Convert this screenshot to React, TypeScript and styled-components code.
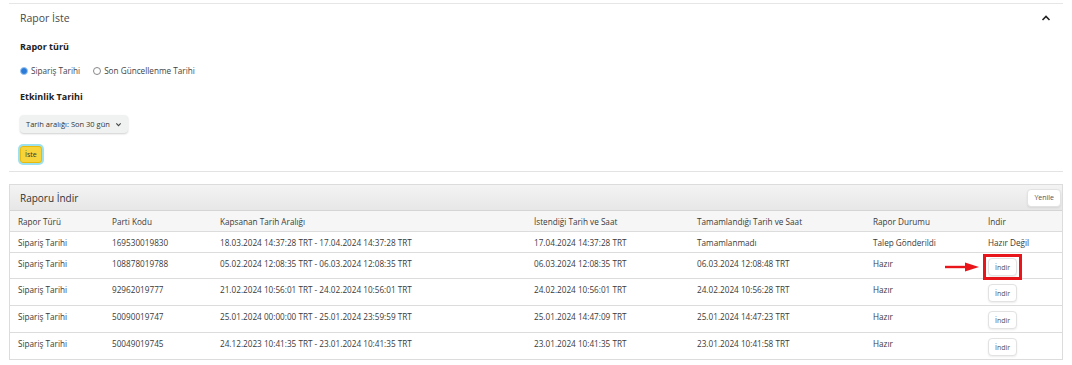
import React from "react";
import styled, { createGlobalStyle } from "styled-components";

const Global = createGlobalStyle`
  html, body { margin: 0; padding: 0; background: #fff; }
  body { font-family: "Open Sans", "Noto Sans", sans-serif; color: #333; }
  * { box-sizing: border-box; }
`;

const Page = styled.div`
  padding: 3px 9px 0 9px;
  width: 1072px;
`;

const RequestSection = styled.section`
  border-top: 1px solid #e6e6e6;
  border-bottom: 1px solid #e3e3e3;
  padding: 6px 11px 8px 11px;
  height: 169px;
`;

const SectionHead = styled.div`
  display: flex;
  align-items: center;
  justify-content: space-between;
  height: 16px;
`;

const SectionTitle = styled.h2`
  margin: 0;
  font-size: 10.5px;
  font-weight: 400;
  color: #4a4a4a;
`;

const Chevron = styled.svg`
  width: 10px;
  height: 10px;
  margin-right: 1px;
`;

const Label = styled.div<{ $top: number }>`
  font-size: 9px;
  font-weight: 700;
  color: #222;
  margin-top: ${(p) => p.$top}px;
`;

const RadioRow = styled.div`
  display: flex;
  align-items: center;
  gap: 13px;
  margin-top: 12px;
`;

const RadioItem = styled.label`
  display: flex;
  align-items: center;
  gap: 3px;
  font-size: 8.2px;
  color: #444;
`;

const RadioDot = styled.span<{ $on?: boolean }>`
  width: 8px;
  height: 8px;
  border-radius: 50%;
  border: 1px solid ${(p) => (p.$on ? "#9cc4ee" : "#888")};
  background: ${(p) => (p.$on ? "#2a7ad8" : "#fff")};
`;

const Dropdown = styled.div`
  margin-top: 12px;
  display: inline-flex;
  align-items: center;
  gap: 5px;
  height: 18px;
  padding: 0 6px 0 6px;
  background: #f0f2f2;
  border-radius: 4px;
  box-shadow: 0 1px 2px rgba(15, 17, 17, 0.2);
  font-size: 7.5px;
  color: #333;
`;

const Small = styled.svg`
  width: 7px;
  height: 7px;
`;

const AskButton = styled.button`
  display: block;
  margin-top: 13px;
  height: 17px;
  padding: 0 4px;
  background: #f8d43c;
  border: 1px solid #e6b90c;
  border-radius: 3px;
  box-shadow: 0 0 0 2px #9ee1ee;
  font-family: inherit;
  font-size: 7px;
  color: #333;
`;

const ReportPanel = styled.section`
  margin-top: 12px;
  border: 1px solid #dcdcdc;
  border-bottom: none;
  width: 1054px;
`;

const PanelHeader = styled.div`
  display: flex;
  align-items: center;
  justify-content: space-between;
  height: 26px;
  padding: 0 1px 0 10px;
  background: linear-gradient(#f3f3f3, #e7e7e7);
  border-bottom: 1px solid #d5d5d5;
`;

const PanelTitle = styled.h3`
  margin: 0;
  font-size: 10px;
  font-weight: 400;
  color: #333;
`;

const WhiteButton = styled.button`
  height: 18px;
  padding: 0 6px;
  background: #fff;
  border: 1px solid #e2e2e2;
  border-radius: 4px;
  box-shadow: 0 1px 2px rgba(0, 0, 0, 0.08);
  font-family: inherit;
  font-size: 7px;
  color: #555;
`;

const MarkBox = styled.span`
  display: inline-block;
  margin: -4px 0 0 -5px;
  border: 3px solid #e8161b;
  line-height: 0;
  padding: 1px 2px;
`;

const Row = styled.div<{ $head?: boolean; $h: number }>`
  display: grid;
  grid-template-columns: 94px 108px 314px 163px 176px 115px 82px;
  height: ${(p) => p.$h}px;
  background: ${(p) => (p.$head ? "#f6f6f6" : "#fff")};
  border-bottom: 1px solid #dcdcdc;
`;

const Cell = styled.div`
  position: relative;
  padding: 6px 0 0 8px;
  font-size: 8.2px;
  line-height: 10px;
  color: #3a3a3a;
  white-space: nowrap;
`;

const ButtonCell = styled(Cell)`
  padding-top: 5px;
`;

const Arrow = styled.svg`
  position: absolute;
  left: -35px;
  top: 9px;
  width: 34px;
  height: 10px;
`;

type R = {
  code: string;
  range: string;
  asked: string;
  done: string;
  status: string;
  ready: boolean;
  mark?: boolean;
};

const rows: R[] = [
  {
    code: "169530019830",
    range: "18.03.2024 14:37:28 TRT - 17.04.2024 14:37:28 TRT",
    asked: "17.04.2024 14:37:28 TRT",
    done: "Tamamlanmadı",
    status: "Talep Gönderildi",
    ready: false,
  },
  {
    code: "108878019788",
    range: "05.02.2024 12:08:35 TRT - 06.03.2024 12:08:35 TRT",
    asked: "06.03.2024 12:08:35 TRT",
    done: "06.03.2024 12:08:48 TRT",
    status: "Hazır",
    ready: true,
    mark: true,
  },
  {
    code: "92962019777",
    range: "21.02.2024 10:56:01 TRT - 24.02.2024 10:56:01 TRT",
    asked: "24.02.2024 10:56:01 TRT",
    done: "24.02.2024 10:56:28 TRT",
    status: "Hazır",
    ready: true,
  },
  {
    code: "50090019747",
    range: "25.01.2024 00:00:00 TRT - 25.01.2024 23:59:59 TRT",
    asked: "25.01.2024 14:47:09 TRT",
    done: "25.01.2024 14:47:23 TRT",
    status: "Hazır",
    ready: true,
  },
  {
    code: "50049019745",
    range: "24.12.2023 10:41:35 TRT - 23.01.2024 10:41:35 TRT",
    asked: "23.01.2024 10:41:35 TRT",
    done: "23.01.2024 10:41:58 TRT",
    status: "Hazır",
    ready: true,
  },
];

const heads = [
  "Rapor Türü",
  "Parti Kodu",
  "Kapsanan Tarih Aralığı",
  "İstendiği Tarih ve Saat",
  "Tamamlandığı Tarih ve Saat",
  "Rapor Durumu",
  "İndir",
];

export default function App() {
  return (
    <>
      <Global />
      <Page>
        <RequestSection>
          <SectionHead>
            <SectionTitle>Rapor İste</SectionTitle>
            <Chevron viewBox="0 0 10 10">
              <path d="M1.5 7 L5 3.5 L8.5 7" fill="none" stroke="#222" strokeWidth="1.6" />
            </Chevron>
          </SectionHead>
          <Label $top={14}>Rapor türü</Label>
          <RadioRow>
            <RadioItem>
              <RadioDot $on />
              Sipariş Tarihi
            </RadioItem>
            <RadioItem>
              <RadioDot />
              Son Güncellenme Tarihi
            </RadioItem>
          </RadioRow>
          <Label $top={14}>Etkinlik Tarihi</Label>
          <Dropdown>
            Tarih aralığı: Son 30 gün
            <Small viewBox="0 0 8 8">
              <path d="M1.5 2.8 L4 5.3 L6.5 2.8" fill="none" stroke="#444" strokeWidth="1.3" />
            </Small>
          </Dropdown>
          <AskButton>İste</AskButton>
        </RequestSection>

        <ReportPanel>
          <PanelHeader>
            <PanelTitle>Raporu İndir</PanelTitle>
            <WhiteButton>Yenile</WhiteButton>
          </PanelHeader>
          <Row $head $h={21}>
            {heads.map((h) => (
              <Cell key={h}>{h}</Cell>
            ))}
          </Row>
          {rows.map((r, i) => (
            <Row key={r.code} $h={i === 0 ? 21 : i === 1 ? 26 : 27}>
              <Cell>Sipariş Tarihi</Cell>
              <Cell>{r.code}</Cell>
              <Cell>{r.range}</Cell>
              <Cell>{r.asked}</Cell>
              <Cell>{r.done}</Cell>
              <Cell>{r.status}</Cell>
              {r.ready ? (
                <ButtonCell>
                  {r.mark ? (
                    <>
                      <Arrow viewBox="0 0 34 10">
                        <rect x="0" y="3.8" width="22" height="2.4" fill="#e8161b" />
                        <path d="M20 0.5 L34 5 L20 9.5 Z" fill="#e8161b" />
                      </Arrow>
                      <MarkBox>
                        <WhiteButton>İndir</WhiteButton>
                      </MarkBox>
                    </>
                  ) : (
                    <WhiteButton>İndir</WhiteButton>
                  )}
                </ButtonCell>
              ) : (
                <Cell>Hazır Değil</Cell>
              )}
            </Row>
          ))}
        </ReportPanel>
      </Page>
    </>
  );
}
